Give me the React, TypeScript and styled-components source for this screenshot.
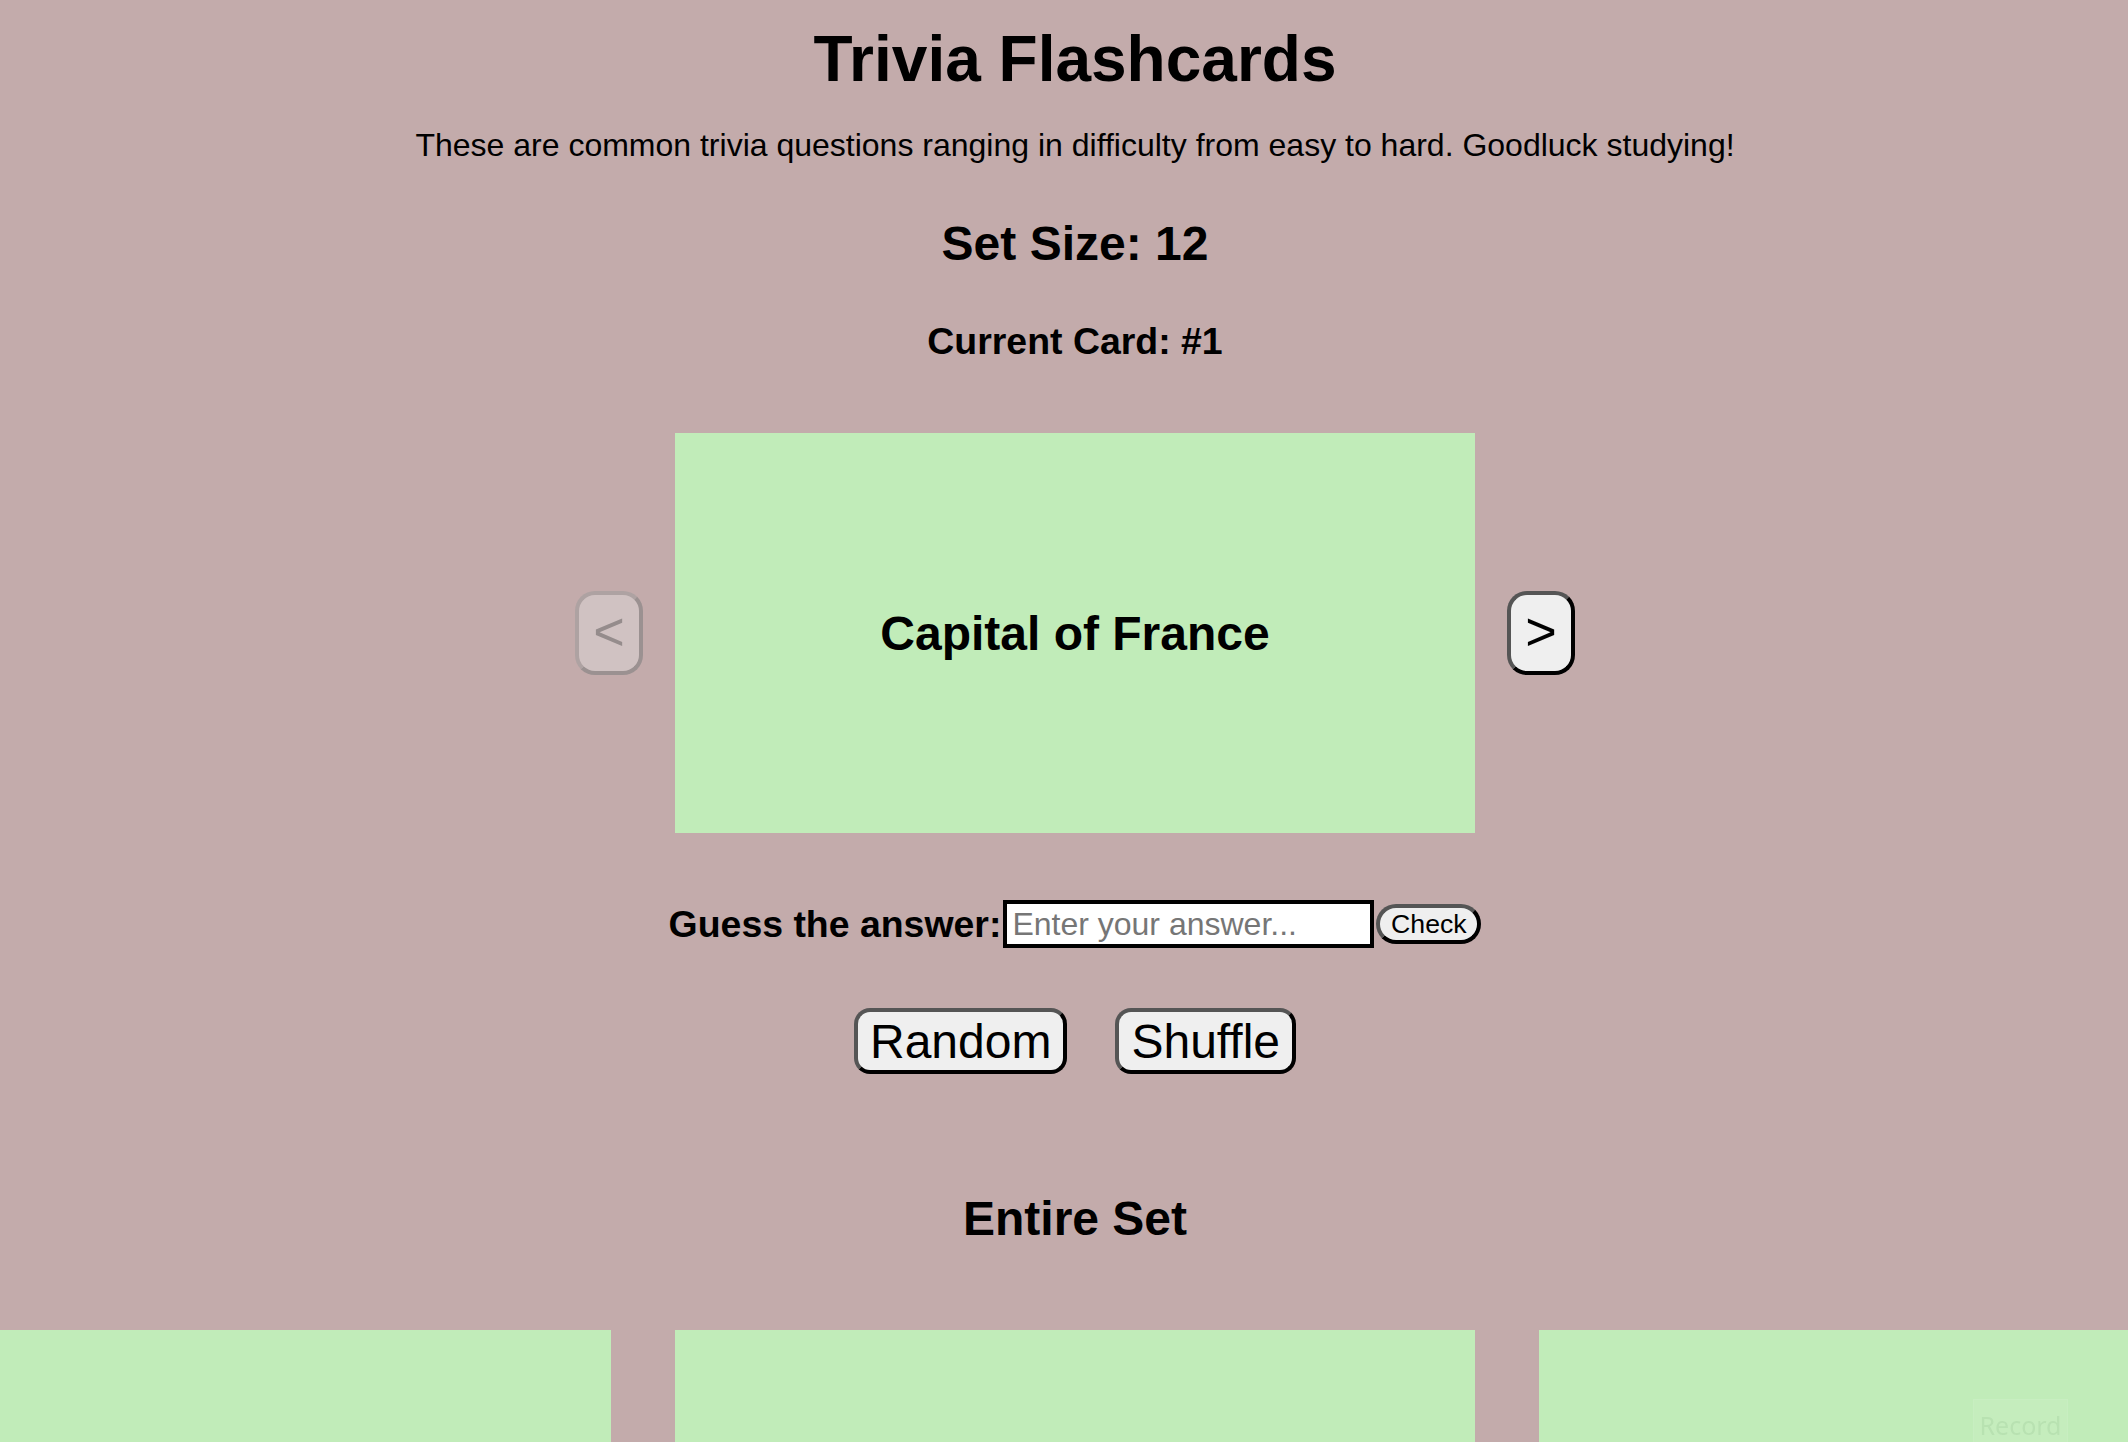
import React from "react";
import styled, { createGlobalStyle } from "styled-components";

const GlobalStyle = createGlobalStyle`
  html, body {
    margin: 0;
    padding: 0;
    background: #c3abab;
    overflow: hidden;
  }
  body {
    font-family: "Liberation Sans", Arial, sans-serif;
    color: #000;
  }
`;

const Page = styled.main`
  display: flex;
  flex-direction: column;
  align-items: center;
  padding-left: 22px;
  text-align: center;
`;

const Title = styled.h1`
  margin: 22px 0 0;
  font-size: 64px;
  line-height: 74px;
  font-weight: 700;
`;

const Intro = styled.p`
  margin: 31px 0 0;
  font-size: 32px;
  line-height: 37px;
`;

const SetSize = styled.h2`
  margin: 52px 0 0;
  font-size: 48px;
  line-height: 55px;
  font-weight: 700;
`;

const CurrentCard = styled.h3`
  margin: 49px 0 0;
  font-size: 37.44px;
  line-height: 43px;
  font-weight: 700;
`;

const Viewer = styled.section`
  margin-top: 70px;
  display: flex;
  align-items: center;
  gap: 32px;
`;

const Card = styled.div`
  width: 800px;
  height: 400px;
  flex: 0 0 auto;
  background: #c1ecb9;
  display: flex;
  align-items: center;
  justify-content: center;
  font-size: 48px;
  line-height: 55px;
  font-weight: 700;
`;

const CardText = styled.span`
  display: block;
  padding: 0 40px;
`;

const BaseButton = styled.button`
  font-family: "Liberation Sans", Arial, sans-serif;
  color: #000;
  background: #efefef;
  border-style: solid;
  border-width: 4px;
  border-color: #555 #000 #000 #555;
  box-sizing: border-box;
  padding: 0;
  display: inline-flex;
  align-items: center;
  justify-content: center;
  cursor: pointer;
`;

const ArrowButton = styled(BaseButton)<{ $disabled?: boolean }>`
  width: 68px;
  height: 84px;
  border-radius: 20px;
  font-size: 54px;
  line-height: 1;
  padding-bottom: 4px;
  ${(p) =>
    p.$disabled
      ? `
    background: #d0c2c2;
    border-color: #aea2a2 #9b9191 #9b9191 #aea2a2;
    color: #958c8c;
    cursor: default;
  `
      : ""}
`;

const GuessRow = styled.form`
  margin-top: 67px;
  display: flex;
  align-items: center;
  height: 48px;
`;

const GuessLabel = styled.label`
  font-size: 37.44px;
  line-height: 43px;
  font-weight: 700;
  margin-right: 2px;
`;

const AnswerInput = styled.input`
  width: 371px;
  height: 48px;
  box-sizing: border-box;
  border: 4px solid #000;
  padding: 0 5px;
  font-family: "Liberation Sans", Arial, sans-serif;
  font-size: 32px;
  background: #fff;
  outline: none;
  &::placeholder {
    color: #767676;
  }
`;

const CheckButton = styled(BaseButton)`
  margin-left: 2px;
  width: 105px;
  height: 40px;
  border-radius: 20px;
  font-size: 26.67px;
  padding: 0 12px;
`;

const ActionRow = styled.div`
  margin-top: 60px;
  display: flex;
  gap: 48px;
`;

const ActionButton = styled(BaseButton)`
  height: 66px;
  border-radius: 16px;
  font-size: 48px;
  padding: 0 12px;
`;

const SectionTitle = styled.h2`
  margin: 117px 0 0;
  font-size: 48px;
  line-height: 55px;
  font-weight: 700;
`;

const CardGrid = styled.div`
  margin-top: 84px;
  width: 100%;
  display: grid;
  grid-template-columns: repeat(3, 800px);
  gap: 64px;
  justify-content: center;
`;

const Watermark = styled.div`
  position: fixed;
  left: 1973px;
  top: 1399px;
  width: 95px;
  height: 60px;
  box-sizing: border-box;
  background: rgba(255, 255, 255, 0.07);
  border: 1px solid rgba(255, 255, 255, 0.05);
  display: flex;
  justify-content: center;
  padding-top: 10px;
  font-family: "Noto Sans", "Open Sans", sans-serif;
  font-size: 25px;
  line-height: 30px;
  color: rgba(60, 110, 60, 0.09);
`;

const cards = [
  "Capital of France",
  "Largest planet in our solar system",
  "Author of Romeo and Juliet",
  "Chemical symbol for gold",
  "Year the Titanic sank",
  "Smallest prime number",
  "Longest river in the world",
  "Painter of the Mona Lisa",
  "Hardest natural substance",
  "Number of bones in the adult human body",
  "Currency of Japan",
  "Speed of light in a vacuum",
];

export default function App() {
  return (
    <>
      <GlobalStyle />
      <Page>
        <Title>Trivia Flashcards</Title>
        <Intro>
          These are common trivia questions ranging in difficulty from easy to
          hard. Goodluck studying!
        </Intro>
        <SetSize>Set Size: 12</SetSize>
        <CurrentCard>Current Card: #1</CurrentCard>
        <Viewer>
          <ArrowButton type="button" $disabled>
            &lt;
          </ArrowButton>
          <Card>
            <CardText>Capital of France</CardText>
          </Card>
          <ArrowButton type="button">&gt;</ArrowButton>
        </Viewer>
        <GuessRow onSubmit={(e) => e.preventDefault()}>
          <GuessLabel htmlFor="answer">Guess the answer:</GuessLabel>
          <AnswerInput id="answer" placeholder="Enter your answer..." />
          <CheckButton type="submit">Check</CheckButton>
        </GuessRow>
        <ActionRow>
          <ActionButton type="button">Random</ActionButton>
          <ActionButton type="button">Shuffle</ActionButton>
        </ActionRow>
        <SectionTitle>Entire Set</SectionTitle>
        <CardGrid>
          {cards.map((c) => (
            <Card key={c}>
              <CardText>{c}</CardText>
            </Card>
          ))}
        </CardGrid>
      </Page>
      <Watermark>Record</Watermark>
    </>
  );
}
